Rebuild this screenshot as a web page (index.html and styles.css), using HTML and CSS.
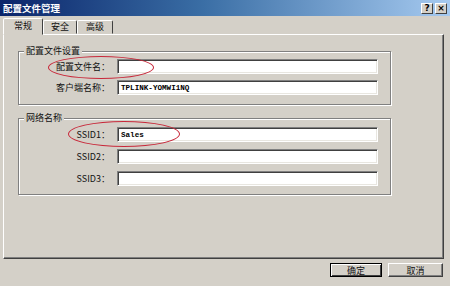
FILE: index.html
```html
<!DOCTYPE html>
<html lang="zh-CN">
<head>
  <meta charset="UTF-8">
  <title>配置文件管理</title>
  <link rel="stylesheet" href="styles.css">
</head>
<body>
  <div class="window">
    <div class="titlebar">
      <span class="title">配置文件管理</span>
      <div class="caption-btns">
        <span class="cbtn">?</span>
        <span class="cbtn">×</span>
      </div>
    </div>

    <div class="tabs">
      <span class="tab active">常规</span>
      <span class="tab t2">安全</span>
      <span class="tab t3">高级</span>
    </div>

    <div class="panel">
      <div class="group g1">
        <span class="legend">配置文件设置</span>
        <div class="row">
          <label>配置文件名：</label>
          <div class="field"></div>
        </div>
        <div class="row">
          <label>客户端名称：</label>
          <div class="field">TPLINK-YOMWI1NQ</div>
        </div>
      </div>

      <div class="group g2">
        <span class="legend">网络名称</span>
        <div class="row">
          <label>SSID1：</label>
          <div class="field">Sales</div>
        </div>
        <div class="row">
          <label>SSID2：</label>
          <div class="field"></div>
        </div>
        <div class="row">
          <label>SSID3：</label>
          <div class="field"></div>
        </div>
      </div>
    </div>

    <div class="buttons">
      <button class="btn default">确定</button>
      <button class="btn cancel">取消</button>
    </div>

    <div class="mark m1"></div>
    <div class="mark m2"></div>
  </div>
</body>
</html>
```

FILE: styles.css
```css
body {
  margin: 0;
  background: #d4d0c8;
  font-family: "Noto Sans CJK SC", "DejaVu Sans", sans-serif;
  font-size: 9px;
  color: #111;
}
.window {
  position: relative;
  width: 450px;
  height: 286px;
  background: #d4d0c8;
  overflow: hidden;
}

/* title bar */
.titlebar {
  height: 16px;
  display: flex;
  align-items: center;
  justify-content: space-between;
  padding: 0 3px 0 3px;
  background: linear-gradient(to right, #0a246a 0%, #3a6ea5 45%, #a6caf0 100%);
}
.title {
  color: #fff;
  font-weight: bold;
  font-size: 9.5px;
  line-height: 16px;
}
.caption-btns {
  display: flex;
  gap: 2px;
}
.cbtn {
  width: 12px;
  height: 11px;
  box-sizing: border-box;
  background: #d4d0c8;
  border: 1px solid;
  border-color: #fff #404040 #404040 #fff;
  font-family: "DejaVu Sans", sans-serif;
  font-size: 9px;
  font-weight: bold;
  line-height: 9px;
  text-align: center;
  color: #000;
}

/* tabs */
.tabs {
  height: 18px;
  display: flex;
  align-items: flex-end;
  padding-left: 3px;
  position: relative;
  z-index: 2;
}
.tab {
  height: 14px;
  box-sizing: border-box;
  border: 1px solid;
  border-color: #fff #404040 transparent #fff;
  border-radius: 2px 2px 0 0;
  text-align: center;
  line-height: 12px;
}
.tab.active {
  width: 40px;
  height: 17px;
  margin-bottom: -1px;
  background: #d4d0c8;
  line-height: 14px;
}
.tab.t2 { width: 34px; }
.tab.t3 { width: 36px; }

/* tab panel */
.panel {
  margin-left: 3px;
  width: 441px;
  height: 225px;
  box-sizing: border-box;
  border: 1px solid;
  border-color: #fff #404040 #404040 #fff;
  box-shadow: inset -1px -1px 0 #808080;
  padding: 16px 0 0 14px;
}
.group {
  position: relative;
  width: 373px;
  box-sizing: border-box;
  border: 1px solid #808080;
  box-shadow: 1px 1px 0 #fff, inset 1px 1px 0 #fff;
  display: grid;
  grid-template-columns: 91px 261px;
  column-gap: 7px;
}
.g1 {
  padding: 7px 0 9px 0;
  row-gap: 6px;
}
.g2 {
  margin-top: 13px;
  padding: 8px 0 8px 0;
  row-gap: 7px;
}
.legend {
  position: absolute;
  left: 5px;
  top: -7px;
  padding: 0 2px;
  background: #d4d0c8;
  line-height: 12px;
}
.row {
  display: contents;
}
.row label {
  text-align: right;
  line-height: 15px;
}
.field {
  height: 15px;
  box-sizing: border-box;
  background: #fff;
  border: 1px solid;
  border-color: #808080 #fff #fff #808080;
  box-shadow: inset 1px 1px 0 #404040, inset -1px -1px 0 #e8e6e0;
  padding-left: 3px;
  font-family: "Liberation Mono", monospace;
  font-size: 7.6px;
  font-weight: bold;
  line-height: 14px;
  color: #000;
}

/* buttons */
.buttons {
  display: flex;
  justify-content: flex-end;
  gap: 6px;
  padding-right: 7px;
  margin-top: 4px;
}
.btn {
  height: 14px;
  box-sizing: border-box;
  padding: 0;
  background: #d4d0c8;
  border: 1px solid;
  border-color: #fff #404040 #404040 #fff;
  box-shadow: inset -1px -1px 0 #808080;
  font-family: "Noto Sans CJK SC", sans-serif;
  font-size: 9px;
  line-height: 11px;
  color: #111;
}
.btn.default {
  width: 52px;
  border: 1px solid #000;
  box-shadow: inset 1px 1px 0 #fff, inset -1px -1px 0 #404040;
}
.btn.cancel {
  width: 55px;
}

/* red annotation ellipses */
.mark {
  position: absolute;
  border: 1.5px solid #c8283a;
  border-radius: 50%;
}
.m1 {
  left: 48px;
  top: 56px;
  width: 104px;
  height: 21px;
}
.m2 {
  left: 68px;
  top: 121px;
  width: 110px;
  height: 24px;
}
```
